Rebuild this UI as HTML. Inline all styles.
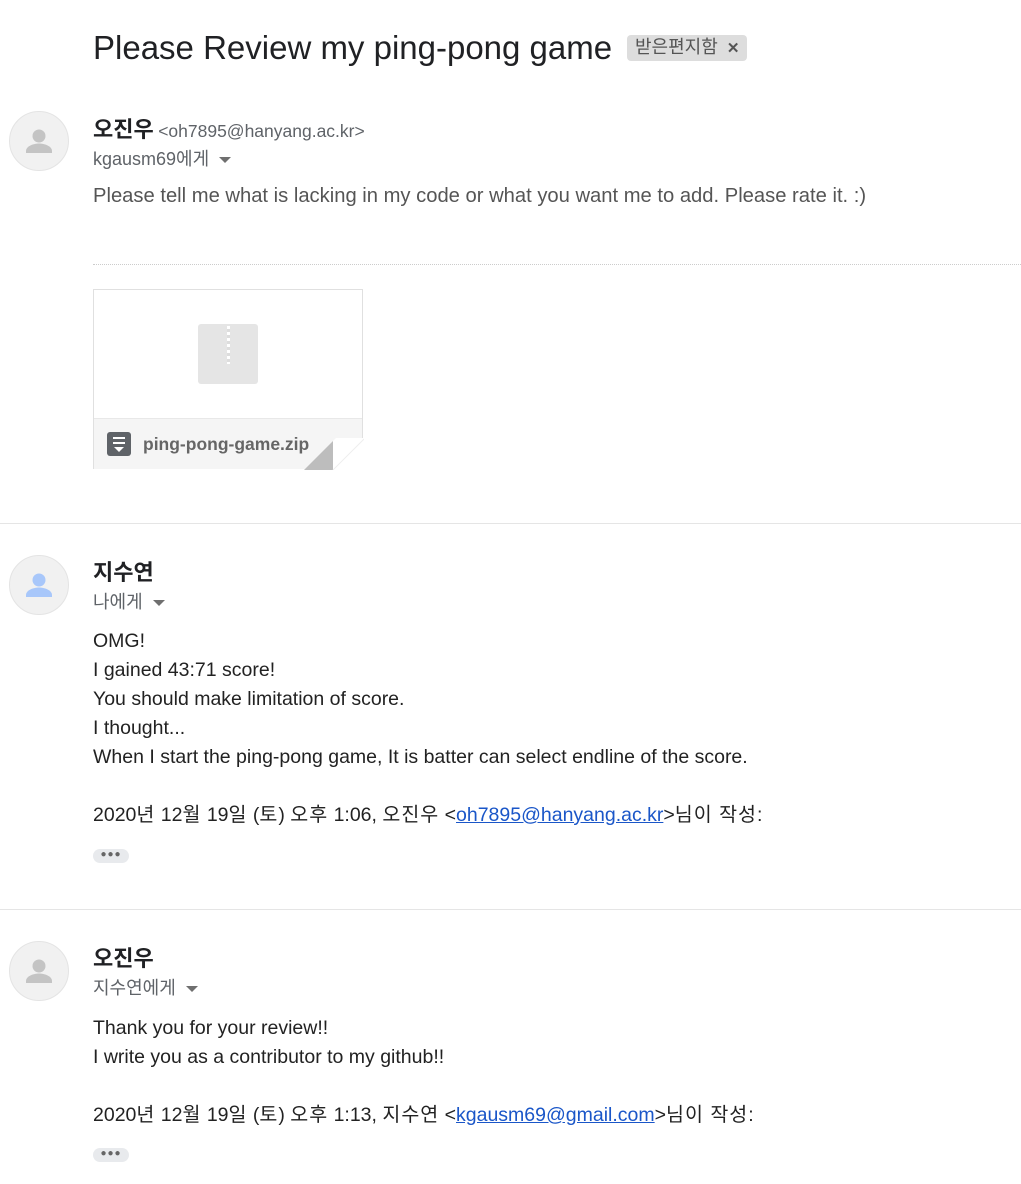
<!DOCTYPE html>
<html><head><meta charset="utf-8"><style>
body{margin:0;width:1021px;height:1184px;background:#fff;position:relative;font-family:"Liberation Sans","Noto Sans CJK KR",sans-serif;overflow:hidden}
.a{position:absolute;white-space:nowrap}
.av{position:absolute;left:9px;width:58px;height:58px;border-radius:50%;background:#f1f1f1;border:1px solid #e4e4e4}
.name{font-size:22px;font-weight:bold;color:#202124}
.to{font-size:18px;color:#5f6368}
.tri{display:inline-block;width:0;height:0;border-left:6px solid transparent;border-right:6px solid transparent;border-top:6px solid #6f6f6f;vertical-align:middle;margin-left:10px}
.body{font-size:19.5px;color:#222;line-height:29px}
.k{letter-spacing:1px}
.dots{position:absolute;left:93px;width:36px;height:14px;border-radius:7px;background:#e8eaed;font-size:10px;color:#666;text-align:center;line-height:12px;letter-spacing:1px}
.sep{position:absolute;left:0;width:1021px;height:1px;background:#e5e5e5}
a{color:#1a56c8}
</style></head><body>
<div class="a" style="left:93px;top:29px;font-size:33px;color:#202124">Please Review my ping-pong game</div>
<div class="a" style="left:627px;top:35px;height:26px;padding:0 8px;background:#ddd;border-radius:4px;font-size:18px;color:#555;line-height:25px">받은편지함 <span style="font-size:15px;font-weight:bold;margin-left:4px">✕</span></div>

<div class="av" style="top:111px"><svg width="58" height="58" viewBox="0 0 58 58"><circle cx="29" cy="24" r="6.5" fill="#c4c4c4"/><path d="M16 39c0-5 8-7.5 13-7.5s13 2.5 13 7.5v2H16z" fill="#c4c4c4"/></svg></div>
<div class="a" style="left:93px;top:112px"><span class="name">오진우</span> <span style="font-size:17.5px;color:#5f6368">&lt;oh7895@hanyang.ac.kr&gt;</span></div>
<div class="a to" style="left:93px;top:145px">kgausm69에게<span class="tri"></span></div>
<div class="a" style="left:93px;top:185px;font-size:20.2px;color:#555">Please tell me what is lacking in my code or what you want me to add. Please rate it. :)</div>
<div class="a" style="left:93px;top:264px;width:928px;border-top:1px dotted #ccc"></div>
<div class="a" style="left:93px;top:289px;width:268px;height:178px;border:1px solid #e0e0e0;background:#fff">
 <div class="a" style="left:104px;top:34px;width:60px;height:60px;background:#e5e5e5;border-radius:3px"><div class="a" style="left:29px;top:2px;width:3px;height:38px;background:repeating-linear-gradient(#fff 0 3px,#ddd 3px 6px)"></div></div>
 <div class="a" style="left:0;top:128px;width:268px;height:50px;background:#f5f5f5;border-top:1px solid #e8e8e8"></div>
 <div class="a" style="left:13px;top:142px;width:24px;height:24px;background:#5f6368;border-radius:3px"><div class="a" style="left:6px;top:5px;width:12px;height:2px;background:#fff"></div><div class="a" style="left:6px;top:10px;width:12px;height:2px;background:#fff"></div><div class="a" style="left:7px;top:15px;border-left:5px solid transparent;border-right:5px solid transparent;border-top:5px solid #fff"></div></div>
 <div class="a" style="left:49px;top:144px;font-size:17.5px;font-weight:bold;color:#666">ping-pong-game.zip</div>
 <svg class="a" style="left:210px;top:148px" width="60" height="32"><polygon points="0,32 29,32 29,3" fill="#bdbdbd"/><polygon points="29,3 29,32 60,32 60,0 32,0" fill="#fff"/><line x1="29" y1="32" x2="60" y2="1" stroke="#eee"/></svg>
</div>
<div class="sep" style="top:523px"></div>

<div class="av" style="top:555px"><svg width="58" height="58" viewBox="0 0 58 58"><circle cx="29" cy="24" r="6.5" fill="#a8c7fa"/><path d="M16 39c0-5 8-7.5 13-7.5s13 2.5 13 7.5v2H16z" fill="#a8c7fa"/></svg></div>
<div class="a name" style="left:93px;top:555px">지수연</div>
<div class="a to" style="left:93px;top:588px">나에게<span class="tri"></span></div>
<div class="a body" style="left:93px;top:627px">OMG!<br>I gained 43:71 score!<br>You should make limitation of score.<br>I thought...<br>When I start the ping-pong game, It is batter can select endline of the score.<br><br>2020<span class="k">년</span> 12<span class="k">월</span> 19<span class="k">일</span> (<span class="k">토</span>) <span class="k">오후</span> 1:06, <span class="k">오진우</span> &lt;<a href="#">oh7895@hanyang.ac.kr</a>&gt;<span class="k">님이 작성</span>:</div>
<div class="dots" style="top:849px">●●●</div>
<div class="sep" style="top:909px"></div>

<div class="av" style="top:941px"><svg width="58" height="58" viewBox="0 0 58 58"><circle cx="29" cy="24" r="6.5" fill="#c4c4c4"/><path d="M16 39c0-5 8-7.5 13-7.5s13 2.5 13 7.5v2H16z" fill="#c4c4c4"/></svg></div>
<div class="a name" style="left:93px;top:941px">오진우</div>
<div class="a to" style="left:93px;top:974px">지수연에게<span class="tri"></span></div>
<div class="a body" style="left:93px;top:1014px">Thank you for your review!!<br>I write you as a contributor to my github!!<br><br>2020<span class="k">년</span> 12<span class="k">월</span> 19<span class="k">일</span> (<span class="k">토</span>) <span class="k">오후</span> 1:13, <span class="k">지수연</span> &lt;<a href="#">kgausm69@gmail.com</a>&gt;<span class="k">님이 작성</span>:</div>
<div class="dots" style="top:1148px">●●●</div>
</body></html>
